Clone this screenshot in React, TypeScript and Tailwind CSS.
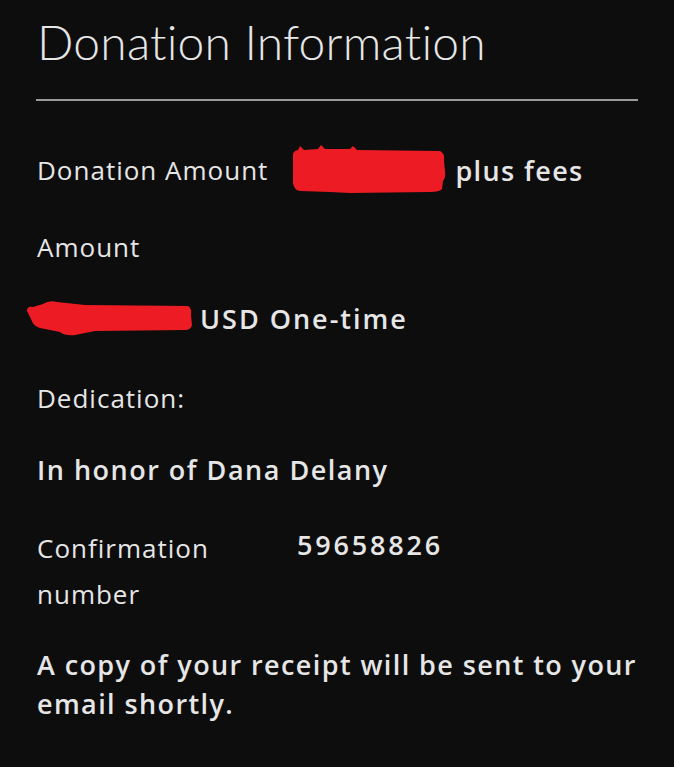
import React from "react";

function ScribbleA() {
  return (
    <svg width={156} height={50} viewBox="0 0 156 50" className="shrink-0 ml-[22px]">
      <path
        d="M3 12 Q2 6 8 5 L10 1 L14 5 L28 4 L31 0 L35 4 L60 4 L63 1 L67 5 L150 6 Q155 8 154 16 L155 26 Q156 32 153 36 L152 44 Q150 47 140 47 L60 48 L40 47 L10 46 Q4 45 3 38 Z"
        fill="#ed1c24"
      />
    </svg>
  );
}

function ScribbleB() {
  return (
    <svg width={168} height={38} viewBox="0 0 168 38" className="shrink-0">
      <path
        d="M2 12 Q2 7 8 8 L18 5 Q24 1 32 3 L60 6 L163 7 Q167 9 166 16 L167 26 Q166 31 160 31 L70 32 L50 36 Q40 37 35 33 L15 29 Q8 27 6 20 Z"
        fill="#ed1c24"
      />
    </svg>
  );
}

export default function App() {
  const title = { fontFamily: "Lato, 'Noto Sans', sans-serif" };
  const body = { fontFamily: "'Open Sans', 'Noto Sans', sans-serif" };
  return (
    <div className="w-[674px] h-[767px] bg-[#0d0d0d] text-[#e6e6e6] overflow-hidden" style={body}>
      <div className="pl-[37px] pr-[34px]">
        <div className="h-[76px] flex items-end pb-[10px]" style={title}>
          <h1 className="text-[48px] font-light leading-none tracking-[0.2px]">Donation Information</h1>
        </div>
        <div className="h-[2px] bg-[#9a9a9a] mt-[23px] -ml-[1px] mr-[2px]" />
        <div className="h-[40px] mt-[49px] flex items-center">
          <span className="text-[26px] leading-none tracking-[1px]">Donation Amount</span>
          <ScribbleA />
          <span className="text-[27px] font-semibold leading-none tracking-[1.4px] ml-[9px]">plus fees</span>
        </div>
        <div className="h-[40px] mt-[37px] flex items-center">
          <span className="text-[26px] leading-none tracking-[1px]">Amount</span>
        </div>
        <div className="h-[40px] mt-[31px] flex items-center -ml-[12px]">
          <ScribbleB />
          <span className="text-[27px] font-semibold leading-none tracking-[2px] ml-[7px]">USD One-time</span>
        </div>
        <div className="h-[40px] mt-[40px] flex items-center">
          <span className="text-[26px] leading-none tracking-[1px]">Dedication:</span>
        </div>
        <div className="h-[40px] mt-[31px] flex items-center">
          <span className="text-[27px] font-semibold leading-none tracking-[1.5px]">In honor of Dana Delany</span>
        </div>
        <div className="flex mt-[36px]">
          <div className="w-[260px] text-[26px] leading-[46px] tracking-[1px]">
            Confirmation
            <br />
            number
          </div>
          <div className="text-[27px] font-semibold leading-[40px] tracking-[2.8px]">59658826</div>
        </div>
        <div className="mt-[28px] text-[27px] font-semibold leading-[39px] tracking-[1.4px]">
          A copy of your receipt will be sent to your email shortly.
        </div>
      </div>
    </div>
  );
}
